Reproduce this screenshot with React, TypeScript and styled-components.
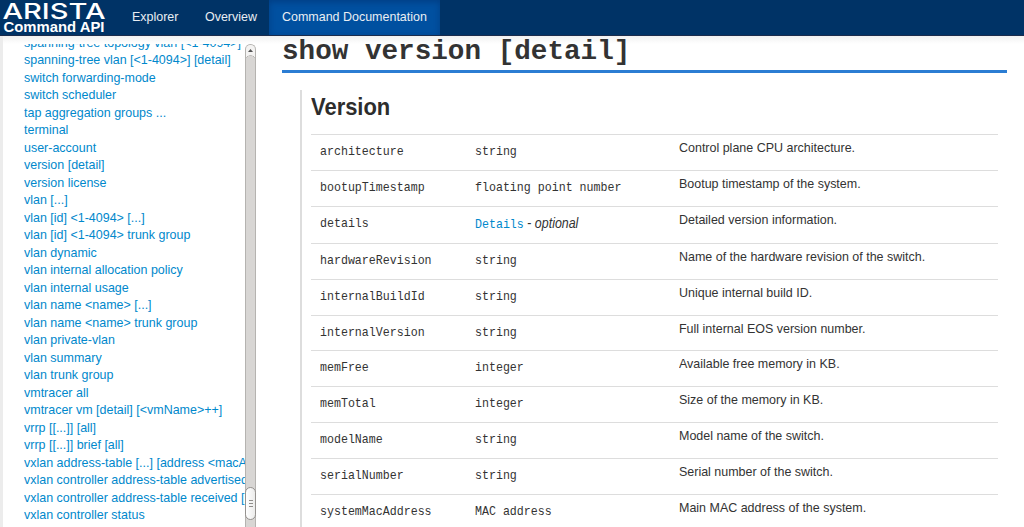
import React from "react";
import styled, { createGlobalStyle } from "styled-components";

const Global = createGlobalStyle`
  * { box-sizing: border-box; }
  html, body { margin: 0; height: 527px; overflow: hidden; background: #fff; }
  body { font-family: "Liberation Sans", Arial, sans-serif; font-size: 13.3px; color: #333; }
`;

const Page = styled.div`
  height: 527px;
  display: flex;
  flex-direction: column;
  overflow: hidden;
`;
const NavBar = styled.header`
  flex: none;
  height: 36px;
  display: flex;
  background: #003366;
  border-bottom: 1px solid #1b2c4c;
`;
const Brand = styled.svg`
  width: 119px;
  height: 35px;
  flex: none;
`;
/* Slightly condensed text that keeps its height. */
const Condensed = styled.span`
  display: inline-block;
  white-space: nowrap;
  transform: scaleX(0.938);
  transform-origin: left;
`;
const NavItem = styled.a<{ $active?: boolean; $width: number }>`
  width: ${(p) => p.$width}px;
  padding-left: 13px;
  line-height: 34px;
  color: #e9eef3;
  white-space: nowrap;
  background: ${(p) => (p.$active ? "#0050a0" : "transparent")};
  box-shadow: ${(p) => (p.$active ? "inset 0 2px 6px rgba(0, 30, 80, 0.35)" : "none")};
`;
const Body = styled.div`
  flex: 1;
  min-height: 0;
  display: flex;
  background: linear-gradient(#f1f1f1, #fff 8px);
`;
const Sidebar = styled.nav`
  width: 257px;
  padding-top: 7.5px;
  display: flex;
  border-left: 3px solid #ececec;
`;
const CommandList = styled.ul`
  list-style: none;
  margin: 0;
  padding: 0 0 0 21.4px;
  width: 242px;
  overflow: hidden;
`;
const CommandItem = styled.li`
  height: 17.5px;
  line-height: 17.5px;
  color: #0088cc;
  white-space: nowrap;
  &:first-child { margin-top: -10px; }
`;
const ScrollTrack = styled.div`
  width: 11px;
  flex: none;
  display: flex;
  flex-direction: column;
  justify-content: space-between;
  background: #d8d6d4;
  border: 1px solid #b5b3b0;
  border-bottom: 0;
  border-radius: 6px 6px 0 0;
`;
const ScrollButton = styled.div`
  height: 16px;
  padding-top: 4px;
  display: flex;
  justify-content: center;
  align-items: flex-start;
  background: radial-gradient(ellipse 6px 6px at 50% 100%, #d8d6d4 86%, #b5b3b0 90%, #f4f3f2 100%);
  border-radius: 5px 5px 0 0;
`;
const ScrollThumb = styled.div`
  height: 33px;
  margin: 0 -1px 7px;
  border: 1px solid #95928f;
  border-radius: 6px;
  background: linear-gradient(90deg, #fff, #ececeb);
  display: flex;
  flex-direction: column;
  align-items: center;
  justify-content: center;
  gap: 2px;
`;
const Grip = styled.i`
  width: 4px;
  height: 1px;
  background: #8f8d8a;
`;
const Main = styled.main`
  flex: 1;
  min-width: 0;
  padding: 0 17px 0 25px;
`;
const Title = styled.h1`
  margin: 0;
  height: 37px;
  font: bold 27.65px/31px "Liberation Mono", monospace;
  color: #333;
  border-bottom: 3px solid #2b7dd3;
`;
const Section = styled.section`
  margin: 17px 9px 0 18px;
  padding-left: 9px;
  height: 440px;
  border-left: 2px solid #ddd;
`;
const SectionTitle = styled.h2`
  margin: 0;
  height: 44px;
  font-size: 23.4px;
  line-height: 34px;
  color: #2d2d2d;
`;
const Row = styled.div<{ $tall?: boolean }>`
  height: ${(p) => (p.$tall ? 37.2 : 35.85)}px;
  display: grid;
  grid-template-columns: 155px 204px 1fr;
  padding-left: 9px;
  border-top: 1px solid #ddd;
`;
const Code = styled.code`
  font: 13px/17px "Liberation Mono", monospace;
  padding-top: 8px;
  white-space: nowrap;
  transform: scaleX(0.894);
  transform-origin: left;
`;
const Optional = styled.span`
  font: 13.9px/17px "Liberation Sans", sans-serif;
`;
const Link = styled.a`
  color: #0088cc;
`;
const Description = styled.span`
  padding-top: 4px;
  line-height: 17px;
`;

const commands = [
  "spanning-tree topology vlan [<1-4094>]",
  "spanning-tree vlan [<1-4094>] [detail]",
  "switch forwarding-mode",
  "switch scheduler",
  "tap aggregation groups ...",
  "terminal",
  "user-account",
  "version [detail]",
  "version license",
  "vlan [...]",
  "vlan [id] <1-4094> [...]",
  "vlan [id] <1-4094> trunk group",
  "vlan dynamic",
  "vlan internal allocation policy",
  "vlan internal usage",
  "vlan name <name> [...]",
  "vlan name <name> trunk group",
  "vlan private-vlan",
  "vlan summary",
  "vlan trunk group",
  "vmtracer all",
  "vmtracer vm [detail] [<vmName>++]",
  "vrrp [[...]] [all]",
  "vrrp [[...]] brief [all]",
  "vxlan address-table [...] [address <macAddr>]",
  "vxlan controller address-table advertised",
  "vxlan controller address-table received [...]",
  "vxlan controller status",
];

const fields: [string, string, string][] = [
  ["architecture", "string", "Control plane CPU architecture."],
  ["bootupTimestamp", "floating point number", "Bootup timestamp of the system."],
  ["details", "Details", "Detailed version information."],
  ["hardwareRevision", "string", "Name of the hardware revision of the switch."],
  ["internalBuildId", "string", "Unique internal build ID."],
  ["internalVersion", "string", "Full internal EOS version number."],
  ["memFree", "integer", "Available free memory in KB."],
  ["memTotal", "integer", "Size of the memory in KB."],
  ["modelName", "string", "Model name of the switch."],
  ["serialNumber", "string", "Serial number of the switch."],
  ["systemMacAddress", "MAC address", "Main MAC address of the system."],
];

export default function App() {
  return (
    <Page>
      <Global />
      <NavBar>
        <Brand viewBox="0 0 119 35" fill="#fff">
          <text x="2.5" y="18.7" fontFamily="Inter" fontWeight="500" fontSize="21.8" textLength="103" lengthAdjust="spacingAndGlyphs">ARISTA</text>
          <text x="3.5" y="32" fontFamily="Liberation Sans" fontWeight="700" fontSize="15" textLength="101" lengthAdjust="spacingAndGlyphs">Command API</text>
        </Brand>
        <NavItem $width={72.5}><Condensed>Explorer</Condensed></NavItem>
        <NavItem $width={77.5}><Condensed>Overview</Condensed></NavItem>
        <NavItem $width={171} $active><Condensed>Command Documentation</Condensed></NavItem>
      </NavBar>
      <Body>
        <Sidebar>
          <CommandList>
            {commands.map((c) => (
              <CommandItem key={c}><Condensed>{c}</Condensed></CommandItem>
            ))}
          </CommandList>
          <ScrollTrack>
            <ScrollButton>
              <svg width="5" height="3" viewBox="0 0 5 3"><path d="M0 3L2.5 0L5 3Z" fill="#555" /></svg>
            </ScrollButton>
            <ScrollThumb><Grip /><Grip /><Grip /></ScrollThumb>
          </ScrollTrack>
        </Sidebar>
        <Main>
          <Title>show version [detail]</Title>
          <Section>
            <SectionTitle><Condensed>Version</Condensed></SectionTitle>
            {fields.map(([name, type, text]) => (
              <Row key={name} $tall={type === "Details"}>
                <Code>{name}</Code>
                <Code>
                  {type === "Details" ? (
                    <><Link>Details</Link><Optional> - <em>optional</em></Optional></>
                  ) : type}
                </Code>
                <Description><Condensed>{text}</Condensed></Description>
              </Row>
            ))}
          </Section>
        </Main>
      </Body>
    </Page>
  );
}
